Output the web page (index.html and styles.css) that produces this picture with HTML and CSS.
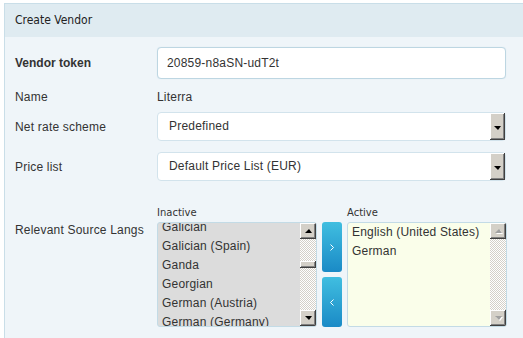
FILE: index.html
```html
<!DOCTYPE html>
<html lang="en">
  <head>
    <meta charset="UTF-8" />
    <meta name="viewport" content="width=device-width, initial-scale=1.0" />
    <title>Create Vendor</title>
    <link rel="stylesheet" href="styles.css">
  </head>
  <body>
    <div class="panel">
      <div class="panel-heading">Create Vendor</div>
      <div class="panel-body">
        <div class="row row-token">
          <label class="label strong">Vendor token</label>
          <input class="field" type="text" value="20859-n8aSN-udT2t" />
        </div>

        <div class="row row-name">
          <span class="label">Name</span>
          <span class="value">Literra</span>
        </div>

        <div class="row row-net">
          <span class="label">Net rate scheme</span>
          <div class="select">
            <span class="select-text">Predefined</span>
            <span class="select-btn"><i class="arrow-down"></i></span>
          </div>
        </div>

        <div class="row row-price">
          <span class="label">Price list</span>
          <div class="select">
            <span class="select-text">Default Price List (EUR)</span>
            <span class="select-btn"><i class="arrow-down"></i></span>
          </div>
        </div>

        <div class="row row-langs">
          <span class="label label-top">Relevant Source Langs</span>
          <div class="dual">
            <div class="dual-col">
              <div class="caption">Inactive</div>
              <div class="listbox inactive">
                <ul class="items scrolled">
                  <li>Galician</li>
                  <li>Galician (Spain)</li>
                  <li>Ganda</li>
                  <li>Georgian</li>
                  <li>German (Austria)</li>
                  <li>German (Germany)</li>
                </ul>
                <div class="scrollbar">
                  <span class="sb-btn"><i class="tri-up"></i></span>
                  <span class="sb-track"><span class="sb-thumb"></span></span>
                  <span class="sb-btn"><i class="tri-down"></i></span>
                </div>
              </div>
            </div>

            <div class="moves">
              <button class="move">
                <svg width="4" height="7" viewBox="0 0 4 7"><path d="M0.5 0.5 L3.5 3.5 L0.5 6.5" fill="none" stroke="#fff" stroke-width="1"/></svg>
              </button>
              <button class="move">
                <svg width="4" height="7" viewBox="0 0 4 7"><path d="M3.5 0.5 L0.5 3.5 L3.5 6.5" fill="none" stroke="#fff" stroke-width="1"/></svg>
              </button>
            </div>

            <div class="dual-col">
              <div class="caption">Active</div>
              <div class="listbox active">
                <ul class="items">
                  <li>English (United States)</li>
                  <li>German</li>
                </ul>
                <div class="scrollbar">
                  <span class="sb-btn disabled"><i class="tri-up"></i></span>
                  <span class="sb-track"></span>
                  <span class="sb-btn disabled"><i class="tri-down"></i></span>
                </div>
              </div>
            </div>
          </div>
        </div>
      </div>
    </div>
  </body>
</html>
```

FILE: styles.css
```css
body {
  margin: 0;
  background-color: #ffffff;
  font-family: "Liberation Sans", Arial, sans-serif;
  font-size: 12px;
  letter-spacing: 0.2px;
  color: #333333;
  overflow: hidden;
}
.panel {
  margin: 3px 0 0 4px;
  border-top: 1px solid #c9dee8;
  border-left: 1px solid #c9dee8;
}
.panel-heading {
  height: 33px;
  line-height: 33px;
  padding-left: 10px;
  background-color: #dfebf1;
  font-family: "DejaVu Sans Condensed", "Liberation Sans Narrow", sans-serif;
  font-size: 12px;
  letter-spacing: 0;
  color: #222222;
}
.panel-body {
  background-color: #eff5f9;
  padding: 10px 0 20px 10px;
  display: flex;
  flex-direction: column;
}
.row {
  display: flex;
  align-items: center;
}
.row-name {
  margin-top: 9px;
  height: 18px;
}
.row-net {
  margin-top: 6px;
}
.row-price {
  margin-top: 11px;
}
.row-langs {
  margin-top: 26px;
  align-items: flex-start;
}
.label {
  width: 142px;
  flex-shrink: 0;
  line-height: 18px;
}
.label-top {
  padding-top: 14px;
}
.strong {
  font-weight: bold;
  letter-spacing: 0;
}

/* text input */
.field {
  box-sizing: border-box;
  width: 349px;
  height: 32px;
  padding: 0 9px;
  border: 1px solid #bdd6e2;
  border-radius: 4px;
  box-shadow: 0 0 1px #cfe2ec;
  background-color: #ffffff;
  font-family: "Liberation Sans", Arial, sans-serif;
  font-size: 12px;
  letter-spacing: 0.2px;
  color: #333333;
  outline: none;
}

/* fake select */
.select {
  box-sizing: border-box;
  width: 349px;
  height: 29px;
  display: flex;
  align-items: stretch;
  border: 1px solid #d2e3ec;
  border-radius: 4px;
  background-color: #ffffff;
}
.select-text {
  flex: 1;
  padding-left: 11px;
  line-height: 27px;
}
.select-btn {
  width: 15px;
  display: flex;
  align-items: center;
  justify-content: center;
  background-color: #d4d0c8;
  box-shadow: inset -1px -1px #404040, inset 1px 1px #ffffff, inset -2px -2px #808080;
}
.arrow-down,
.tri-down {
  width: 0;
  height: 0;
  border-left: 4px solid transparent;
  border-right: 3px solid transparent;
  border-top: 4px solid #000000;
}
.arrow-down {
  margin-top: 2px;
}
.tri-up {
  width: 0;
  height: 0;
  border-left: 4px solid transparent;
  border-right: 3px solid transparent;
  border-bottom: 4px solid #000000;
}

/* dual listbox */
.dual {
  display: flex;
  gap: 5px;
}
.dual-col {
  display: flex;
  flex-direction: column;
}
.caption {
  font-family: "DejaVu Sans", sans-serif;
  font-size: 10px;
  letter-spacing: 0;
  line-height: 12px;
  padding-bottom: 3px;
  color: #333333;
}
.listbox {
  box-sizing: border-box;
  width: 160px;
  height: 105px;
  display: flex;
  border: 1px solid #c3dbe6;
  border-radius: 3px;
  overflow: hidden;
}
.inactive {
  background-color: #dcdcdc;
}
.active {
  background-color: #fafeea;
}
.items {
  flex: 1;
  list-style-type: none;
  margin: 0;
  padding: 0 0 0 4px;
  overflow: hidden;
  font-size: 12px;
  line-height: 19px;
  white-space: nowrap;
}
.scrolled li:first-child {
  margin-top: -5px;
}
.scrollbar {
  width: 16px;
  flex-shrink: 0;
  display: flex;
  flex-direction: column;
}
.sb-btn {
  height: 16px;
  display: flex;
  align-items: center;
  justify-content: center;
  background-color: #d4d0c8;
  box-shadow: inset -1px -1px #404040, inset 1px 1px #ffffff, inset -2px -2px #808080;
}
.sb-btn.disabled .tri-up {
  border-bottom-color: #a0a0a0;
  filter: drop-shadow(1px 1px 0 #ffffff);
}
.sb-btn.disabled .tri-down {
  border-top-color: #a0a0a0;
  filter: drop-shadow(1px 1px 0 #ffffff);
}
.sb-track {
  flex: 1;
  background: repeating-conic-gradient(#d4d0c8 0 25%, #ffffff 0 50%) 0 0 / 2px 2px;
}
.sb-thumb {
  display: block;
  height: 7px;
  margin-top: 22px;
  background-color: #d4d0c8;
  box-shadow: inset -1px -1px #404040, inset 1px 1px #ffffff, inset -2px -2px #808080;
}
.moves {
  display: flex;
  flex-direction: column;
  gap: 5px;
  padding-top: 15px;
}
.move {
  width: 20px;
  height: 50px;
  padding: 0;
  border: none;
  border-radius: 3px;
  background: linear-gradient(#40bee0, #1a8ac6);
  display: flex;
  align-items: center;
  justify-content: center;
  cursor: pointer;
}
```
